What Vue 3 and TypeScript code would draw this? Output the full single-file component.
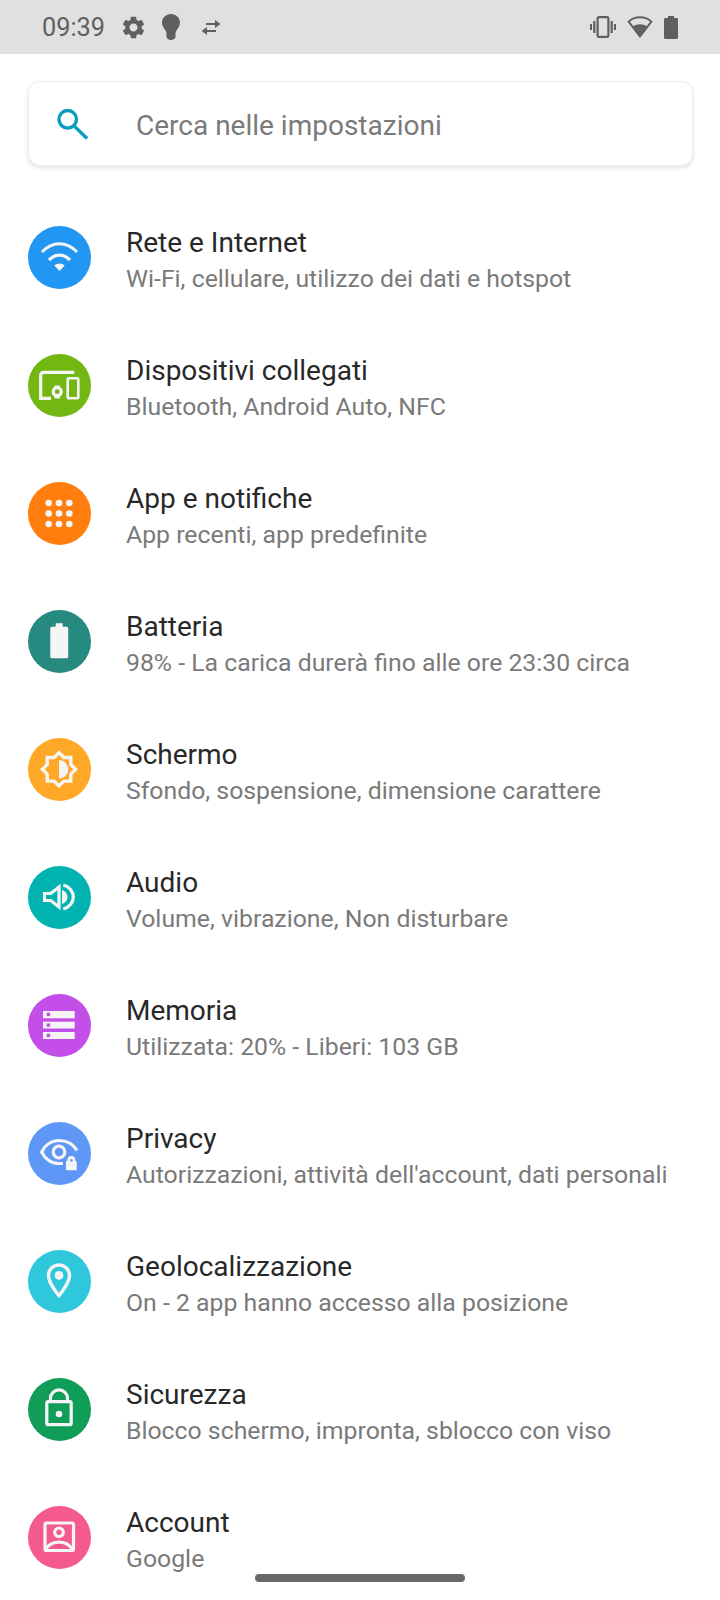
<template>
  <div class="screen">
    <div class="status-bar">
      <span class="time">09:39</span>
      <svg class="st-gear" viewBox="0 0 24 24"><path d="M19.14 12.94c.04-.3.06-.61.06-.94 0-.32-.02-.64-.07-.94l2.03-1.58a.49.49 0 0 0 .12-.61l-1.92-3.32a.488.488 0 0 0-.59-.22l-2.39.96c-.5-.38-1.03-.7-1.62-.94l-.36-2.54a.484.484 0 0 0-.48-.41h-3.84c-.24 0-.43.17-.47.41l-.36 2.54c-.59.24-1.13.57-1.62.94l-2.39-.96c-.22-.08-.47 0-.59.22L2.74 8.87c-.12.21-.08.47.12.61l2.03 1.58c-.05.3-.09.63-.09.94s.02.64.07.94l-2.03 1.58a.49.49 0 0 0-.12.61l1.92 3.32c.12.22.37.29.59.22l2.39-.96c.5.38 1.03.7 1.62.94l.36 2.54c.05.24.24.41.48.41h3.84c.24 0 .44-.17.47-.41l.36-2.54c.59-.24 1.13-.56 1.62-.94l2.39.96c.22.08.47 0 .59-.22l1.92-3.32c.12-.22.07-.47-.12-.61l-2.01-1.58zM12 15.6c-1.98 0-3.6-1.62-3.6-3.6s1.62-3.6 3.6-3.6 3.6 1.62 3.6 3.6-1.62 3.6-3.6 3.6z" /></svg>
      <svg class="st-bulb" viewBox="0 0 18 26"><path d="M9 0c5 0 9 3.900 9 8.600 0 3.200-1.800 5.600-3.300 7.600-.8 1-1.200 2-1.200 3.200v3.400C13.500 24.600 11.300 26 9 26s-4.500-1.400-4.500-3.200v-3.400c0-1.200-.4-2.200-1.200-3.200C1.800 14.200 0 11.800 0 8.600 0 3.900 4 0 9 0z" /></svg>
      <svg class="st-swap" viewBox="0 0 20 15"><path d="M14 0l5.500 4L14 8V5H5V3h9zM6 7v3h9v2H6v3L.5 11z" /></svg>
      <span class="spacer"></span>
      <svg class="st-vibrate" viewBox="0 0 26 22">
        <rect x="7.600" y="1.200" width="10.800" height="19.600" rx="1.400" fill="none" stroke="#5f5f5f" stroke-width="2.200" />
        <rect x="3.200" y="5" width="2.200" height="12" /><rect x="20.600" y="5" width="2.200" height="12" />
        <rect x="0" y="8" width="2" height="6" /><rect x="24" y="8" width="2" height="6" />
      </svg>
      <svg class="st-wifi" viewBox="0 0 26 22">
        <path d="M13 1.200C8.400 1.200 4.400 2.900 1.600 5.600L13 20.400 24.400 5.600C21.600 2.900 17.600 1.200 13 1.200z" fill="none" stroke="#5f5f5f" stroke-width="2" />
        <path d="M6 10.200c2-1.300 4.400-2 7-2s5 .7 7 2L13 20.400z" />
      </svg>
      <svg class="st-battery" viewBox="0 0 14 23"><path d="M4 0h6v2h2.500c.8 0 1.500.7 1.500 1.500v18c0 .8-.7 1.500-1.500 1.500h-11C.7 23 0 22.300 0 21.500v-18C0 2.700.7 2 1.500 2H4z" /></svg>
    </div>

    <div class="search-card">
      <svg class="search-icon" viewBox="0 0 32 32">
        <circle cx="11.700" cy="11.300" r="8.800" fill="none" stroke="#0a9cbf" stroke-width="3.400" />
        <path d="M17.800 17.600L31 30.500" fill="none" stroke="#0a9cbf" stroke-width="3.400" />
      </svg>
      <span class="search-text">Cerca nelle impostazioni</span>
    </div>

    <div class="list">
      <div v-for="item in items" :key="item.title" class="row">
        <div class="badge" :style="{ background: item.color }">
          <svg viewBox="0 0 63 63" class="glyph">
            <template v-if="item.icon === 'wifi'">
              <path class="line" d="M14 26c10.500-11 24.500-11 35 0" />
              <path class="line" d="M21 34c6.500-6.500 14.500-6.500 21 0" />
              <path class="fill" d="M31.500 37.500c-2 0-3.800.7-5.200 2l5.200 5.500 5.200-5.500c-1.400-1.300-3.200-2-5.200-2z" />
            </template>
            <template v-else-if="item.icon === 'devices'">
              <path class="line" d="M46.300 18.300H15.700a3 3 0 0 0-3 3v23H23" />
              <rect class="line thin" x="39.700" y="24.300" width="10.600" height="20" rx="1" />
              <circle class="line" cx="29.200" cy="37.700" r="4" />
              <path class="fill" d="M26.500 31.500h5.400v2h-5.400zM26.500 42h5.400v2.500h-5.400z" />
            </template>
            <template v-else-if="item.icon === 'apps'">
              <circle v-for="d in dots" :key="d.x + '-' + d.y" class="fill" :cx="d.x" :cy="d.y" r="3.300" />
            </template>
            <template v-else-if="item.icon === 'battery'">
              <path class="fill" d="M27.700 13.300h7v3.400h4a1.500 1.500 0 0 1 1.500 1.500v28.600a1.500 1.500 0 0 1-1.500 1.500H23.800a1.500 1.500 0 0 1-1.500-1.500V18.200a1.500 1.500 0 0 1 1.500-1.500h3.900z" />
            </template>
            <template v-else-if="item.icon === 'display'">
              <g transform="translate(31 31.300) scale(1.680) translate(-12 -12)">
                <path class="fill" d="M20 15.310L23.310 12 20 8.690V4h-4.690L12 .69 8.690 4H4v4.690L.69 12 4 15.310V20h4.690L12 23.310 15.310 20H20v-4.690zM18 14.480V18h-3.520L12 20.480 9.520 18H6v-3.520L3.520 12 6 9.520V6h3.520L12 3.520 14.480 6H18v3.520L20.480 12 18 14.480zM12 6.500v11c3.030 0 5.500-2.470 5.500-5.500S15.030 6.500 12 6.500z" />
              </g>
            </template>
            <template v-else-if="item.icon === 'audio'">
              <path class="line" d="M31 21v20l-8.300-6.500h-6.200v-7h6.200z" />
              <path class="fill" d="M34 24c3.500 1 5.500 3.800 5.500 7s-2 6-5.500 7z" />
              <path class="line" d="M35.300 19c6 1.500 10 6.300 10 12s-4 10.500-10 12" />
            </template>
            <template v-else-if="item.icon === 'storage'">
              <rect class="fill" x="15" y="17" width="31.700" height="7.300" />
              <rect class="fill" x="15" y="27.700" width="31.700" height="6.800" />
              <rect class="fill" x="15" y="38" width="31.700" height="7" />
              <rect :fill="item.color" x="18.700" y="18.700" width="3.400" height="3.400" />
              <rect :fill="item.color" x="18.700" y="29.400" width="3.400" height="3.400" />
              <rect :fill="item.color" x="18.700" y="39.700" width="3.400" height="3.400" />
            </template>
            <template v-else-if="item.icon === 'privacy'">
              <path class="line" d="M49 28.500C45 22 38.500 18.500 31 18.500 23.500 18.500 17 23 13.700 30c3.300 7 9.800 11.500 17.300 11.500h4" />
              <circle class="line" cx="31" cy="30" r="5.800" />
              <path class="fill" d="M39.500 38.700v-.8a3.900 3.900 0 0 1 7.800 0v.8h.400a1 1 0 0 1 1 1v7.600a1 1 0 0 1-1 1h-8.700a1 1 0 0 1-1-1v-7.600a1 1 0 0 1 1-1z" />
              <circle :fill="item.color" cx="43.400" cy="38.400" r="1.300" />
            </template>
            <template v-else-if="item.icon === 'location'">
              <g transform="translate(31 30.700) scale(1.750) translate(-12 -12)">
                <path class="fill" d="M12 2C8.130 2 5 5.130 5 9c0 5.250 7 13 7 13s7-7.750 7-13c0-3.870-3.130-7-7-7zM7 9c0-2.760 2.240-5 5-5s5 2.240 5 5c0 2.880-2.880 7.190-5 9.880C9.920 16.210 7 11.850 7 9z" />
                <circle class="fill" cx="12" cy="9" r="2.500" />
              </g>
            </template>
            <template v-else-if="item.icon === 'lock'">
              <rect class="line" x="18.800" y="23.700" width="24.400" height="23" rx="1.500" />
              <path class="line" d="M22.500 23.700v-3.400a8.500 8.500 0 0 1 17 0v3.400" />
              <circle class="fill" cx="31" cy="36" r="3.300" />
            </template>
            <template v-else>
              <rect class="line" x="17" y="17" width="28.500" height="27.500" rx="1.500" />
              <circle class="line" cx="31" cy="26.300" r="4.300" />
              <path class="line" d="M18 42.500c3-4 8-6.300 13-6.300s10 2.300 13 6.300" />
            </template>
          </svg>
        </div>
        <div class="texts">
          <div class="title">{{ item.title }}</div>
          <div class="subtitle">{{ item.subtitle }}</div>
        </div>
      </div>
    </div>

    <div class="home-pill"></div>
  </div>
</template>

<script setup lang="ts">
interface SettingsItem {
  title: string
  subtitle: string
  color: string
  icon: string
}

const items: SettingsItem[] = [
  { title: 'Rete e Internet', subtitle: 'Wi-Fi, cellulare, utilizzo dei dati e hotspot', color: '#2196f3', icon: 'wifi' },
  { title: 'Dispositivi collegati', subtitle: 'Bluetooth, Android Auto, NFC', color: '#73b812', icon: 'devices' },
  { title: 'App e notifiche', subtitle: 'App recenti, app predefinite', color: '#ff7e0e', icon: 'apps' },
  { title: 'Batteria', subtitle: '98% - La carica durerà fino alle ore 23:30 circa', color: '#268a80', icon: 'battery' },
  { title: 'Schermo', subtitle: 'Sfondo, sospensione, dimensione carattere', color: '#ffa726', icon: 'display' },
  { title: 'Audio', subtitle: 'Volume, vibrazione, Non disturbare', color: '#00b3b0', icon: 'audio' },
  { title: 'Memoria', subtitle: 'Utilizzata: 20% - Liberi: 103 GB', color: '#c44fe8', icon: 'storage' },
  { title: 'Privacy', subtitle: "Autorizzazioni, attività dell'account, dati personali", color: '#5e97f6', icon: 'privacy' },
  { title: 'Geolocalizzazione', subtitle: 'On - 2 app hanno accesso alla posizione', color: '#2ec7dc', icon: 'location' },
  { title: 'Sicurezza', subtitle: 'Blocco schermo, impronta, sblocco con viso', color: '#0f9d58', icon: 'lock' },
  { title: 'Account', subtitle: 'Google', color: '#f4598f', icon: 'account' },
]

// griglia 3x3 dell'icona app
const dots: { x: number; y: number }[] = []
for (const y of [21, 31.5, 42]) {
  for (const x of [20.7, 31, 41.3]) {
    dots.push({ x, y })
  }
}
</script>

<style scoped>
.screen {
  position: relative;
  width: 720px;
  height: 1600px;
  overflow: hidden;
  background: #fff;
  font-family: Roboto, 'Liberation Sans', sans-serif;
}
.status-bar {
  height: 54px;
  background: #e0e0e0;
  display: flex;
  align-items: center;
  padding: 0 42px 0 42px;
  fill: #5f5f5f;
}
.time {
  font-size: 25.3px;
  color: #5f5f5f;
  width: 79px;
}
.spacer {
  flex: 1;
}
.st-gear {
  width: 27px;
  height: 27px;
  margin-left: -1px;
}
.st-bulb {
  width: 18px;
  height: 26px;
  margin-left: 15px;
}
.st-swap {
  width: 20px;
  height: 15px;
  margin-left: 21px;
}
.st-vibrate {
  width: 26px;
  height: 22px;
}
.st-wifi {
  width: 26px;
  height: 22px;
  margin-left: 11px;
}
.st-battery {
  width: 14px;
  height: 23px;
  margin-left: 11px;
}
.search-card {
  margin: 27px 27px 0 28px;
  height: 85px;
  box-sizing: border-box;
  background: #fff;
  border: 1px solid #eee;
  border-radius: 12px;
  box-shadow: 0 2px 4px rgba(0, 0, 0, 0.12);
  display: flex;
  align-items: center;
  padding-left: 27px;
}
.search-icon {
  width: 32px;
  height: 32px;
}
.search-text {
  margin-left: 48px;
  padding-top: 3px;
  font-size: 28px;
  color: #7a7a7a;
}
.list {
  margin-top: 27px;
}
.row {
  height: 128px;
  display: flex;
  align-items: center;
  padding-left: 28px;
}
.badge {
  width: 63px;
  height: 63px;
  border-radius: 50%;
  flex-shrink: 0;
}
.glyph {
  display: block;
  width: 63px;
  height: 63px;
}
.line {
  fill: none;
  stroke: #f5f5f5;
  stroke-width: 3.2;
}
.thin {
  stroke-width: 2.6;
}
.fill {
  fill: #f5f5f5;
}
.texts {
  margin-left: 35px;
  padding-top: 7px;
}
.title {
  font-size: 28px;
  line-height: 36px;
  color: #282828;
}
.subtitle {
  font-size: 24.8px;
  line-height: 36px;
  color: #7a7a7a;
}
.home-pill {
  position: absolute;
  left: 255px;
  top: 1574px;
  width: 210px;
  height: 8px;
  border-radius: 4px;
  background: #696969;
}
</style>
